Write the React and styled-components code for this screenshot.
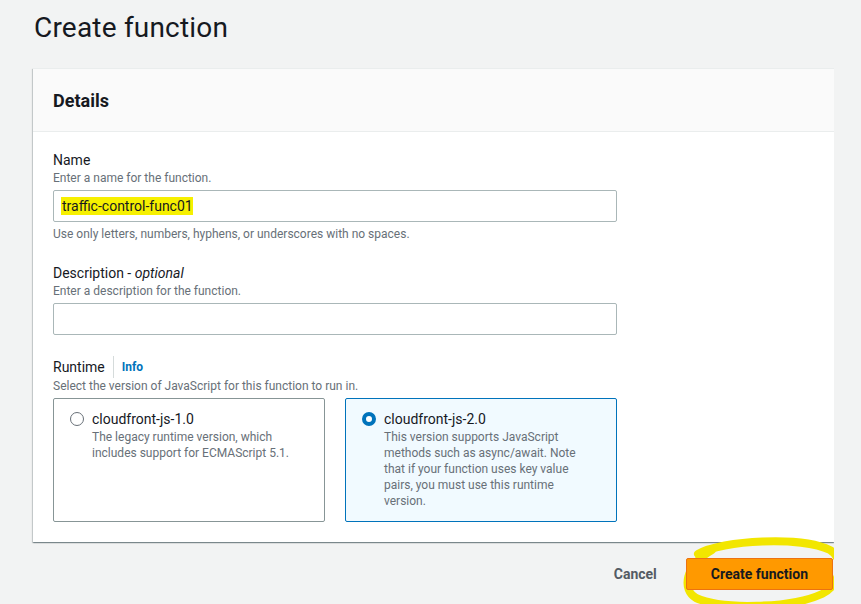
import React, { useState } from 'react';
import styled, { createGlobalStyle } from 'styled-components';

const GlobalStyle = createGlobalStyle`
  html, body {
    margin: 0;
    padding: 0;
    background: #f2f3f3;
    font-family: Roboto, 'Noto Sans', Arial, sans-serif;
    color: #16191f;
  }
`;

const runtimes = [
  {
    id: 'cloudfront-js-1.0',
    text: 'The legacy runtime version, which includes support for ECMAScript 5.1.',
  },
  {
    id: 'cloudfront-js-2.0',
    text: 'This version supports JavaScript methods such as async/await. Note that if your function uses key value pairs, you must use this runtime version.',
  },
];

const App = () => {
  const [runtime, setRuntime] = useState('cloudfront-js-2.0');

  return (
    <Page>
      <GlobalStyle />
      <Title>Create function</Title>
      <Card>
        <CardHeader>
          <CardTitle>Details</CardTitle>
        </CardHeader>
        <CardBody>
          <Field>
            <Label>Name</Label>
            <Hint>Enter a name for the function.</Hint>
            <InputBox>
              <Marked>traffic-control-func01</Marked>
            </InputBox>
            <Constraint>Use only letters, numbers, hyphens, or underscores with no spaces.</Constraint>
          </Field>
          <Field>
            <Label>
              Description - <em>optional</em>
            </Label>
            <Hint>Enter a description for the function.</Hint>
            <InputBox />
          </Field>
          <Field>
            <LabelRow>
              <Label>Runtime</Label>
              <InfoLink>Info</InfoLink>
            </LabelRow>
            <Hint>Select the version of JavaScript for this function to run in.</Hint>
            <Tiles>
              {runtimes.map((r) => (
                <Tile key={r.id} selected={runtime === r.id} onClick={() => setRuntime(r.id)}>
                  <Radio selected={runtime === r.id} />
                  <TileText>
                    <TileLabel>{r.id}</TileLabel>
                    <TileDesc>{r.text}</TileDesc>
                  </TileText>
                </Tile>
              ))}
            </Tiles>
          </Field>
        </CardBody>
      </Card>
      <Footer>
        <CancelButton>Cancel</CancelButton>
        <PrimaryWrap>
          <Scribble viewBox="0 0 180 80" aria-hidden="true">
            <path
              d="M28 18 C 52 4, 132 0, 160 14 C 174 22, 172 48, 152 58 C 122 72, 52 74, 26 62 C 12 54, 14 30, 42 14"
              fill="none"
              stroke="#f2e600"
              strokeWidth="8"
              strokeLinecap="round"
            />
          </Scribble>
          <PrimaryButton>Create function</PrimaryButton>
        </PrimaryWrap>
      </Footer>
    </Page>
  );
};

export default App;

const Page = styled.div`
  padding: 10px 0 0 33px;
  width: 801px;
  height: 594px;
  overflow: hidden;
`;

const Title = styled.h1`
  margin: 0 0 0 1px;
  font-size: 28px;
  font-weight: 400;
  line-height: 36px;
  letter-spacing: 0.2px;
  color: #16191f;
`;

const Card = styled.div`
  margin-top: 22px;
  background: #fff;
  border-top: 1px solid #eaeded;
  box-shadow: 0 1px 1px 0 rgba(0, 28, 36, 0.3), 1px 1px 1px 0 rgba(0, 28, 36, 0.15),
    -1px 1px 1px 0 rgba(0, 28, 36, 0.15);
`;

const CardHeader = styled.div`
  height: 62px;
  padding: 0 20px;
  display: flex;
  align-items: center;
  background: #fafafa;
  border-bottom: 1px solid #eaeded;
`;

const CardTitle = styled.h2`
  margin: 0;
  font-size: 18px;
  font-weight: 700;
`;

const CardBody = styled.div`
  padding: 18px 20px 20px;
  display: flex;
  flex-direction: column;
  gap: 21px;
`;

const Field = styled.div`
  display: flex;
  flex-direction: column;
  width: 564px;
`;

const Label = styled.div`
  font-size: 14px;
  line-height: 20px;
  color: #16191f;

  em {
    font-style: italic;
  }
`;

const LabelRow = styled.div`
  display: flex;
  align-items: center;
`;

const InfoLink = styled.a`
  margin-left: 8px;
  padding-left: 8px;
  border-left: 1px solid #d5dbdb;
  font-size: 12px;
  font-weight: 700;
  line-height: 22px;
  color: #0073bb;
  cursor: pointer;
`;

const Hint = styled.div`
  font-size: 12px;
  line-height: 16px;
  color: #687078;
  margin-bottom: 4px;
`;

const Constraint = styled.div`
  font-size: 12px;
  line-height: 16px;
  color: #687078;
  margin-top: 4px;
`;

const InputBox = styled.div`
  box-sizing: border-box;
  height: 32px;
  padding: 0 7px;
  display: flex;
  align-items: center;
  border: 1px solid #aab7b8;
  border-radius: 2px;
  background: #fff;
  font-size: 14px;
`;

const Marked = styled.span`
  background: #f6f000;
  line-height: 18px;
  padding-left: 1px;
`;

const Tiles = styled.div`
  display: grid;
  grid-template-columns: 272px 272px;
  justify-content: space-between;
`;

const Tile = styled.div`
  box-sizing: border-box;
  height: 124px;
  padding: 10px 16px;
  display: flex;
  gap: 8px;
  border: 1px solid ${(p) => (p.selected ? '#0073bb' : '#879596')};
  border-radius: 2px;
  background: ${(p) => (p.selected ? '#f1faff' : '#fff')};
  cursor: pointer;
`;

const Radio = styled.span`
  box-sizing: border-box;
  flex: 0 0 14px;
  width: 14px;
  height: 14px;
  margin-top: 3px;
  border-radius: 50%;
  border: ${(p) => (p.selected ? '4px solid #0073bb' : '1px solid #687078')};
  background: #fff;
`;

const TileText = styled.div`
  display: flex;
  flex-direction: column;
`;

const TileLabel = styled.div`
  font-size: 14px;
  line-height: 20px;
  color: #16191f;
`;

const TileDesc = styled.div`
  font-size: 12px;
  line-height: 16px;
  color: #687078;
  max-width: 210px;
`;

const Footer = styled.div`
  margin-top: 16px;
  display: flex;
  justify-content: flex-end;
  align-items: center;
  gap: 17px;
`;

const CancelButton = styled.button`
  border: none;
  background: none;
  padding: 0 12px;
  font-family: inherit;
  font-size: 14px;
  font-weight: 700;
  color: #545b64;
  cursor: pointer;
`;

const PrimaryWrap = styled.div`
  position: relative;
  margin-right: 1px;
`;

const PrimaryButton = styled.button`
  position: relative;
  z-index: 1;
  height: 32px;
  padding: 0 24px;
  border: 1px solid #ec7211;
  border-radius: 2px;
  background: #ff9900;
  font-family: inherit;
  font-size: 14px;
  font-weight: 700;
  color: #16191f;
  cursor: pointer;
`;

const Scribble = styled.svg`
  position: absolute;
  left: -16px;
  top: -22px;
  width: 180px;
  height: 80px;
  overflow: visible;
  pointer-events: none;
`;
